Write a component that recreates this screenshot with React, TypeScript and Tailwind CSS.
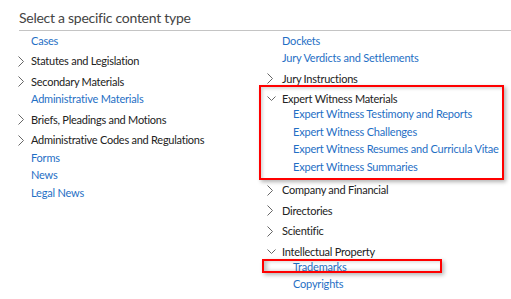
type Item = {
  label: string;
  kind: "link" | "exp" | "open";
  children?: string[];
};

const leftItems: Item[] = [
  { label: "Cases", kind: "link" },
  { label: "Statutes and Legislation", kind: "exp" },
  { label: "Secondary Materials", kind: "exp" },
  { label: "Administrative Materials", kind: "link" },
  { label: "Briefs, Pleadings and Motions", kind: "exp" },
  { label: "Administrative Codes and Regulations", kind: "exp" },
  { label: "Forms", kind: "link" },
  { label: "News", kind: "link" },
  { label: "Legal News", kind: "link" },
];

const rightItems: Item[] = [
  { label: "Dockets", kind: "link" },
  { label: "Jury Verdicts and Settlements", kind: "link" },
  { label: "Jury Instructions", kind: "exp" },
  {
    label: "Expert Witness Materials",
    kind: "open",
    children: [
      "Expert Witness Testimony and Reports",
      "Expert Witness Challenges",
      "Expert Witness Resumes and Curricula Vitae",
      "Expert Witness Summaries",
    ],
  },
  { label: "Company and Financial", kind: "exp" },
  { label: "Directories", kind: "exp" },
  { label: "Scientific", kind: "exp" },
  {
    label: "Intellectual Property",
    kind: "open",
    children: ["Trademarks", "Copyrights"],
  },
];

const ChevronRight = () => (
  <svg width="6" height="11" viewBox="0 0 6 11">
    <path d="M0.5 0.5 L5.5 5.5 L0.5 10.5" fill="none" stroke="#666" strokeWidth="1" />
  </svg>
);

const ChevronDown = () => (
  <svg width="9" height="6" viewBox="0 0 9 6">
    <path d="M0.5 0.5 L4.5 4.5 L8.5 0.5" fill="none" stroke="#666" strokeWidth="1" />
  </svg>
);

const Row = ({ item, slot }: { item: Item; slot: string }) => {
  if (item.kind === "link") {
    return (
      <div className="h-[17.5px] flex items-center text-[11px] tracking-[-0.2px] text-[#1f6fc5]">
        <div className={slot} />
        {item.label}
      </div>
    );
  }
  return (
    <div className="mt-[3px]">
      <div className="h-[17.5px] flex items-center text-[11px] tracking-[-0.25px] text-[#222]">
        <div className={`${slot} flex items-center`}>
          {item.kind === "open" ? <ChevronDown /> : <ChevronRight />}
        </div>
        {item.label}
      </div>
      {item.children && (
        <div className="-mt-[2.5px] mb-[3px]">
          {item.children.map((c) => (
            <div
              key={c}
              className="h-[17.5px] flex items-center text-[11px] tracking-[-0.2px] text-[#1f6fc5]"
            >
              <div className={slot} />
              <div className="w-[11px]" />
              {c}
            </div>
          ))}
        </div>
      )}
    </div>
  );
};

export default function App() {
  return (
    <div className="w-[511px] h-[299px] bg-white overflow-hidden font-['Lato',sans-serif]">
      <div className="pl-[19px] pt-[8px]">
        <div className="h-[22px] text-[14px] tracking-[-0.27px] text-[#444] leading-[20px]">
          Select a specific content type
        </div>
        <div className="h-px bg-[#c4c4c4] w-[600px]" />
      </div>
      <div className="grid grid-cols-[249px_1fr] pl-[18px] pt-[1px]">
        <div className="flex flex-col">
          {leftItems.map((it) => (
            <Row key={it.label} item={it} slot="w-[13px] shrink-0" />
          ))}
        </div>
        <div className="relative flex flex-col">
          {rightItems.map((it) => (
            <Row key={it.label} item={it} slot="w-[15px] shrink-0" />
          ))}
          <div className="absolute left-[-8px] top-[53px] w-[245px] h-[95px] border-2 border-[#f00] shadow-[2px_2px_4px_rgba(0,0,0,0.3),inset_2px_2px_3px_rgba(0,0,0,0.15)] pointer-events-none" />
          <div className="absolute left-[-5px] top-[227px] w-[180px] h-[14px] border-2 border-[#f00] shadow-[2px_2px_4px_rgba(0,0,0,0.3),inset_3px_0_4px_rgba(0,0,0,0.25)] pointer-events-none" />
        </div>
      </div>
    </div>
  );
}
